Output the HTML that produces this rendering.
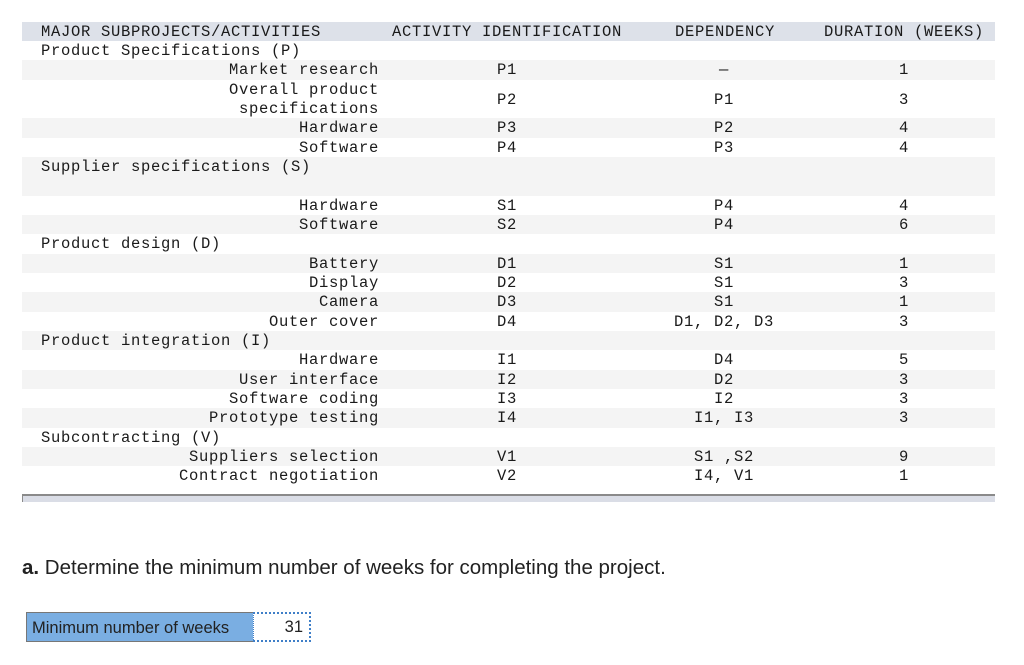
<!DOCTYPE html>
<html><head><meta charset="utf-8"><style>
body{margin:0;width:1024px;height:665px;background:#fff;position:relative;overflow:hidden;font-family:"Liberation Mono",monospace;color:#222}
.r{position:absolute;left:22px;width:973px}
.g{background:#f4f4f4}
.t{position:absolute;top:1px;font-family:"Liberation Mono",monospace;font-size:15.5px;letter-spacing:0.7px;white-space:nowrap;line-height:19px;color:#1a1a1a}
.c1{right:616px;text-align:right;letter-spacing:0.7px}
.c2{left:475px}
.c3{left:602px;width:200px;text-align:center}
.c4{left:782px;width:200px;text-align:center}
.h{left:19px}
</style></head><body>
<div class="r" style="top:22px;height:19px;background:#dde1e9"></div>
<div class="t" style="top:23px;left:41px">MAJOR SUBPROJECTS/ACTIVITIES</div>
<div class="t" style="top:23px;left:392px">ACTIVITY IDENTIFICATION</div>
<div class="t" style="top:23px;left:675px">DEPENDENCY</div>
<div class="t" style="top:23px;left:824px">DURATION (WEEKS)</div>

<div class="r" style="top:41px;height:19px"><div class="t h">Product Specifications (P)</div></div>
<div class="r g" style="top:60px;height:20px"><div class="t c1">Market research</div><div class="t c2">P1</div><div class="t c3">—</div><div class="t c4">1</div></div>
<div class="r" style="top:80px;height:38px"><div class="t c1" style="line-height:19px;top:1px">Overall product<br>specifications</div><div class="t c2" style="top:11px">P2</div><div class="t c3" style="top:11px">P1</div><div class="t c4" style="top:11px">3</div></div>
<div class="r g" style="top:118px;height:20px"><div class="t c1">Hardware</div><div class="t c2">P3</div><div class="t c3">P2</div><div class="t c4">4</div></div>
<div class="r" style="top:138px;height:19px"><div class="t c1">Software</div><div class="t c2">P4</div><div class="t c3">P3</div><div class="t c4">4</div></div>
<div class="r g" style="top:157px;height:39px"><div class="t h" style="top:1px">Supplier specifications (S)</div></div>
<div class="r" style="top:196px;height:19px"><div class="t c1">Hardware</div><div class="t c2">S1</div><div class="t c3">P4</div><div class="t c4">4</div></div>
<div class="r g" style="top:215px;height:19px"><div class="t c1">Software</div><div class="t c2">S2</div><div class="t c3">P4</div><div class="t c4">6</div></div>
<div class="r" style="top:234px;height:20px"><div class="t h">Product design (D)</div></div>
<div class="r g" style="top:254px;height:19px"><div class="t c1">Battery</div><div class="t c2">D1</div><div class="t c3">S1</div><div class="t c4">1</div></div>
<div class="r" style="top:273px;height:19px"><div class="t c1">Display</div><div class="t c2">D2</div><div class="t c3">S1</div><div class="t c4">3</div></div>
<div class="r g" style="top:292px;height:20px"><div class="t c1">Camera</div><div class="t c2">D3</div><div class="t c3">S1</div><div class="t c4">1</div></div>
<div class="r" style="top:312px;height:19px"><div class="t c1">Outer cover</div><div class="t c2">D4</div><div class="t c3">D1, D2, D3</div><div class="t c4">3</div></div>
<div class="r g" style="top:331px;height:19px"><div class="t h">Product integration (I)</div></div>
<div class="r" style="top:350px;height:20px"><div class="t c1">Hardware</div><div class="t c2">I1</div><div class="t c3">D4</div><div class="t c4">5</div></div>
<div class="r g" style="top:370px;height:19px"><div class="t c1">User interface</div><div class="t c2">I2</div><div class="t c3">D2</div><div class="t c4">3</div></div>
<div class="r" style="top:389px;height:19px"><div class="t c1">Software coding</div><div class="t c2">I3</div><div class="t c3">I2</div><div class="t c4">3</div></div>
<div class="r g" style="top:408px;height:20px"><div class="t c1">Prototype testing</div><div class="t c2">I4</div><div class="t c3">I1, I3</div><div class="t c4">3</div></div>
<div class="r" style="top:428px;height:19px"><div class="t h">Subcontracting (V)</div></div>
<div class="r g" style="top:447px;height:19px"><div class="t c1">Suppliers selection</div><div class="t c2">V1</div><div class="t c3">S1 ,S2</div><div class="t c4">9</div></div>
<div class="r" style="top:466px;height:20px"><div class="t c1">Contract negotiation</div><div class="t c2">V2</div><div class="t c3">I4, V1</div><div class="t c4">1</div></div>

<div style="position:absolute;left:22px;top:494px;width:972px;height:6px;background:#dadde6;border-top:2px solid #8a8a8a;border-left:1px solid #8a8a8a"></div>

<div style="position:absolute;left:22px;top:556px;font-family:'Liberation Sans',sans-serif;font-size:20.5px;color:#222;white-space:nowrap"><b>a.</b> Determine the minimum number of weeks for completing the project.</div>

<div style="position:absolute;left:26px;top:612px;width:227px;height:30px;background:#7aaee2;border:1px solid #777;border-right:none;font-family:'Liberation Sans',sans-serif;font-size:16.5px;line-height:30px;padding-left:5px;box-sizing:border-box;color:#222;white-space:nowrap">Minimum number of weeks</div>
<div style="position:absolute;left:253px;top:612px;width:58px;height:30px;box-sizing:border-box;border:2px dotted #3f7fc8;border-left-width:1px;background:#fff;font-family:'Liberation Sans',sans-serif;font-size:16.5px;line-height:27px;text-align:right;padding-right:6px;color:#222">31</div>
</body></html>
